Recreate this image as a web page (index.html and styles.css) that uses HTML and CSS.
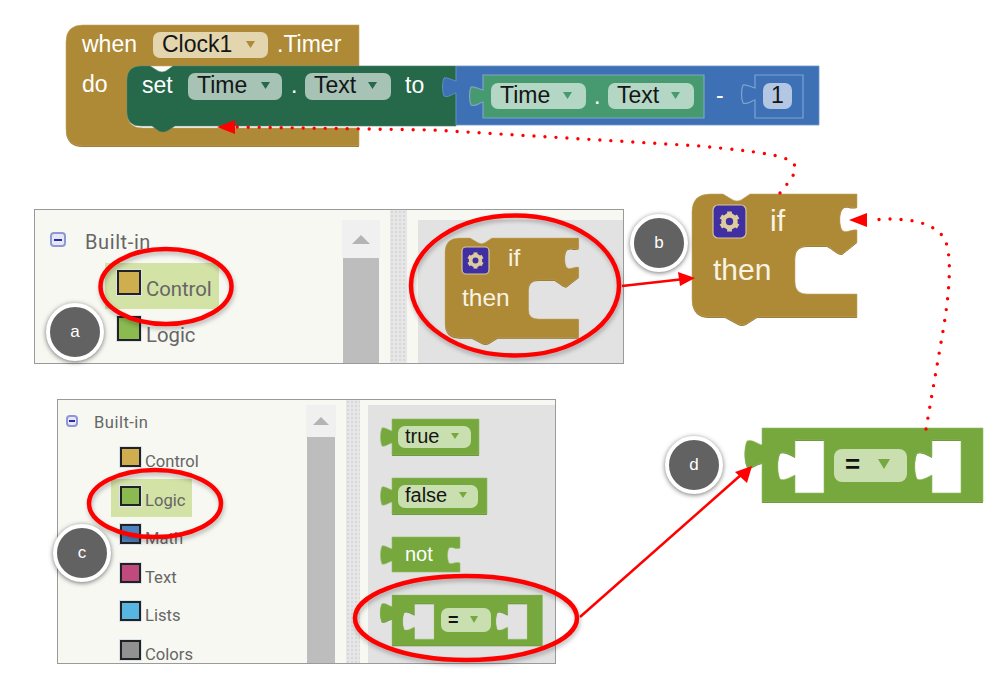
FILE: index.html
```html
<!DOCTYPE html>
<html>
  <head>
    <meta charset="utf-8">
    <title>Building the timer blocks</title>
    <link rel="stylesheet" href="styles.css">
  </head>
  <body>
    <div class="canvas">

      <!-- palette a -->
      <div class="panel panel-a">
        <div class="tree">
          <div class="tree-head">
            <span class="minus"></span>
            <span class="head-label">Built-in</span>
          </div>
          <div class="cat cat-on"><span class="swatch sw-control"></span><span class="cat-label">Control</span></div>
          <div class="cat"><span class="swatch sw-logic"></span><span class="cat-label">Logic</span></div>
        </div>
        <div class="scroll"><div class="scroll-up"><span class="up-arrow"></span></div><div class="thumb"></div></div>
        <div class="splitter"></div>
        <div class="flyout"></div>
      </div>

      <!-- palette c -->
      <div class="panel panel-c">
        <div class="tree">
          <div class="tree-head">
            <span class="minus"></span>
            <span class="head-label">Built-in</span>
          </div>
          <div class="cat"><span class="swatch sw-control"></span><span class="cat-label">Control</span></div>
          <div class="cat cat-on"><span class="swatch sw-logic"></span><span class="cat-label">Logic</span></div>
          <div class="cat"><span class="swatch sw-math"></span><span class="cat-label">Math</span></div>
          <div class="cat"><span class="swatch sw-text"></span><span class="cat-label">Text</span></div>
          <div class="cat"><span class="swatch sw-lists"></span><span class="cat-label">Lists</span></div>
          <div class="cat"><span class="swatch sw-colors"></span><span class="cat-label">Colors</span></div>
        </div>
        <div class="scroll"><div class="scroll-up"><span class="up-arrow"></span></div><div class="thumb"></div></div>
        <div class="splitter"></div>
        <div class="flyout"></div>
      </div>

      <!-- all the blocks -->
      <svg class="layer" width="1000" height="673" viewBox="0 0 1000 673">
        <defs>
          <path id="if-shape" d="M18,0 H31 L41,6 Q45,8 49,6 L58,0 H165 V13 C158,15 155,11 151,14 C147,18 147,31 150,36 C154,40 159,35 165,36 V48 L150,60 C146,61 140,54 135,52 H115 Q103,52 103,64 V88 Q103,100 115,100 H165 V123 H65 L54,130 Q50,132 46,130 L33,123 H18 Q0,123 0,105 V18 Q0,0 18,0 Z"/>
          <path id="eq-shape" fill-rule="evenodd" d="M0,0 H221 V74 H0 V35 C-6,36 -10,41 -15,39 C-18,32 -18,20 -15,13 C-10,11 -6,15 0,17 Z M33,12 H62 V65 H33 V47 C27,50 22,53 18,51 C15,44 15,32 18,25 C22,23 27,26 33,29 Z M170,12 H199 V65 H170 V47 C164,50 159,53 155,51 C152,44 152,32 155,25 C159,23 164,26 170,29 Z"/>
          <g id="gear">
            <circle r="6" class="gear-ring"/>
            <rect x="-2.4" y="-10" width="4.8" height="5" class="gear-tooth"/>
            <rect x="-2.4" y="-10" width="4.8" height="5" class="gear-tooth" transform="rotate(60)"/>
            <rect x="-2.4" y="-10" width="4.8" height="5" class="gear-tooth" transform="rotate(120)"/>
            <rect x="-2.4" y="-10" width="4.8" height="5" class="gear-tooth" transform="rotate(180)"/>
            <rect x="-2.4" y="-10" width="4.8" height="5" class="gear-tooth" transform="rotate(240)"/>
            <rect x="-2.4" y="-10" width="4.8" height="5" class="gear-tooth" transform="rotate(300)"/>
          </g>
        </defs>

        <!-- when Clock1.Timer -->
        <path class="brown-low" d="M66,130 Q66,147 83,147 H359 V140 H80 Z"/>
        <path class="brown" d="M83,25 H359 V66 H141 Q127,66 127,80 V112 Q127,128 143,128 H359 V146 H83 Q66,146 66,129 V42 Q66,25 83,25 Z"/>
        <text class="lbl" x="82" y="52">when</text>
        <rect class="pill-brown" x="153" y="32" width="115" height="26" rx="7"/>
        <text class="val" x="162" y="52">Clock1</text>
        <polygon class="tri-brown" points="246,41 255,41 250.5,48"/>
        <text class="lbl" x="277" y="52">.Timer</text>
        <text class="lbl" x="82" y="92">do</text>

        <!-- set Time.Text to -->
        <path class="dkgreen" d="M141,66 H150 L158,71 Q162,73 166,71 L173,66 H456 V126 H175 L167,131 Q163,133 159,131 L152,126 H141 Q127,126 127,112 V80 Q127,66 141,66 Z"/>
        <text class="lbl" x="142" y="93">set</text>
        <rect class="pill-dk" x="188" y="73" width="94" height="27" rx="7"/>
        <text class="val" x="197" y="93">Time</text>
        <polygon class="tri-dk" points="261,82 270,82 265.5,89"/>
        <text class="lbl" x="291" y="93">.</text>
        <rect class="pill-dk" x="305" y="73" width="86" height="27" rx="7"/>
        <text class="val" x="314" y="93">Text</text>
        <polygon class="tri-dk" points="368,82 377,82 372.5,89"/>
        <text class="lbl" x="405" y="93">to</text>

        <!-- Time.Text - 1 -->
        <path class="blue" d="M456,66 H819 V125 H456 V93 c-4,1 -8,5 -12,3 c-2,-5 -2,-13 0,-18 c3,-1 8,2 12,3 Z"/>
        <path class="socket" d="M755,75 H803 V118 H755 V100 c-4,1 -8,5 -12,3 c-2,-5 -2,-13 0,-18 c3,-1 8,2 12,3 Z"/>
        <path class="teal" d="M483,75 H704 V118 H483 V102 c-4,1 -8,5 -12,3 c-2,-5 -2,-13 0,-18 c3,-1 8,2 12,3 Z"/>
        <rect class="pill-teal" x="491" y="83" width="95" height="26" rx="7"/>
        <text class="val" x="500" y="103">Time</text>
        <polygon class="tri-teal" points="563,92 572,92 567.5,99"/>
        <text class="lbl" x="594" y="104">.</text>
        <rect class="pill-teal" x="608" y="83" width="86" height="26" rx="7"/>
        <text class="val" x="617" y="103">Text</text>
        <polygon class="tri-teal" points="671,92 680,92 675.5,99"/>
        <text class="lbl" x="716" y="103">-</text>
        <rect class="pill-blue" x="763" y="83" width="29" height="26" rx="7"/>
        <text class="val" x="771" y="103">1</text>

        <!-- big if/then -->
        <use href="#if-shape" class="brown-low" transform="translate(692,195)"/>
        <use href="#if-shape" class="brown" transform="translate(692,194)"/>
        <rect class="gear-box" x="713" y="205" width="33" height="33" rx="5"/>
        <use href="#gear" transform="translate(729.5,221.5)"/>
        <text class="lbl-if" x="770" y="231">if</text>
        <text class="lbl-if" x="713" y="280">then</text>

        <!-- flyout if/then -->
        <use href="#if-shape" class="brown-low" transform="translate(445,239) scale(.81)"/>
        <use href="#if-shape" class="brown" transform="translate(445,238) scale(.81)"/>
        <rect class="gear-box" x="462" y="247" width="27" height="27" rx="4"/>
        <use href="#gear" transform="translate(475.5,260.5) scale(.81)"/>
        <text class="lbl-if-s" x="508" y="266">if</text>
        <text class="lbl-if-s" x="462" y="306">then</text>

        <!-- big = -->
        <use href="#eq-shape" class="green-low" transform="translate(762,429)"/>
        <use href="#eq-shape" class="green" transform="translate(762,428)"/>
        <rect class="pill-green" x="834" y="449" width="73" height="33" rx="8"/>
        <text class="val-eq" x="845" y="473">=</text>
        <polygon class="tri-green" points="878,459 890,459 884,469"/>

        <!-- logic flyout -->
        <path class="green-low" d="M392,420 H479 V456 H392 Z"/>
        <path class="green" d="M392,419 H479 V455 H392 V443 c-4,1 -7,4 -10,3 c-2,-5 -2,-13 0,-18 c3,-1 6,2 10,3 Z"/>
        <rect class="pill-green" x="398" y="426" width="73" height="22" rx="7"/>
        <text class="val-s" x="405" y="443">true</text>
        <polygon class="tri-green" points="451,433 459,433 455,439"/>

        <path class="green-low" d="M392,479 H487 V515 H392 Z"/>
        <path class="green" d="M392,478 H487 V514 H392 V502 c-4,1 -7,4 -10,3 c-2,-5 -2,-13 0,-18 c3,-1 6,2 10,3 Z"/>
        <rect class="pill-green" x="398" y="485" width="80" height="23" rx="7"/>
        <text class="val-s" x="405" y="502">false</text>
        <polygon class="tri-green" points="459,492 467,492 463,498"/>

        <path class="green" d="M392,537 H460 V548 C456,550 452,546 449,548 C447,552 447,559 449,563 C452,565 456,561 460,563 V572 H392 V561 c-4,1 -7,4 -10,3 c-2,-5 -2,-13 0,-18 c3,-1 6,2 10,3 Z"/>
        <text class="lbl-s" x="405" y="561">not</text>

        <use href="#eq-shape" class="green-low" transform="translate(392,596) scale(.68)"/>
        <use href="#eq-shape" class="green" transform="translate(392,595) scale(.68)"/>
        <rect class="pill-green" x="441" y="608" width="50" height="24" rx="7"/>
        <text class="val-eq-s" x="448" y="626">=</text>
        <polygon class="tri-green" points="470,616 478,616 474,623"/>
      </svg>

      <!-- red notes on top -->
      <svg class="layer" width="1000" height="673" viewBox="0 0 1000 673">
        <path class="dots" d="M780,193 C790,180 800,170 793,163 C785,155 760,152 700,146 L433,130 L236,127"/>
        <polygon class="head" points="217,127 235,120 235,134"/>
        <path class="dots" d="M926,429 L943,331 C950,290 952,255 945,240 C938,226 918,219 889,219 L870,220"/>
        <polygon class="head" points="849,220 867,213 867,227"/>

        <path class="line" d="M622,286 L680,279.5"/>
        <polygon class="head" points="695,278 678,272 680,286"/>
        <path class="line" d="M580,617 L742,474"/>
        <polygon class="head" points="752,466 735,472 747,483"/>

        <ellipse class="ring" cx="166" cy="286.5" rx="65.5" ry="37.5"/>
        <ellipse class="ring" cx="515" cy="285.5" rx="104" ry="70"/>
        <ellipse class="ring" cx="155" cy="503.5" rx="66" ry="33.5"/>
        <ellipse class="ring" cx="466" cy="618" rx="111" ry="42"/>
      </svg>

      <div class="badge badge-a">a</div>
      <div class="badge badge-b">b</div>
      <div class="badge badge-c">c</div>
      <div class="badge badge-d">d</div>
    </div>
  </body>
</html>
```

FILE: styles.css
```css
html, body {
  margin: 0;
  background: #fff;
}

.canvas {
  position: relative;
  width: 1000px;
  height: 673px;
  overflow: hidden;
  font-family: "Liberation Sans", Arial, sans-serif;
}

.layer {
  position: absolute;
  left: 0;
  top: 0;
}

/* palettes */
.panel {
  position: absolute;
  box-sizing: border-box;
  display: flex;
  overflow: hidden;
  background: #f7f8f2;
  border: 1px solid #9a9a9a;
  font-family: Roboto, sans-serif;
  color: #666;
}

.panel-a {
  left: 34px;
  top: 209px;
  width: 590px;
  height: 155px;
}

.panel-c {
  left: 57px;
  top: 399px;
  width: 499px;
  height: 265px;
}

.tree {
  display: flex;
  flex-direction: column;
  flex: none;
}

.panel-a .tree { width: 307px; }
.panel-c .tree { width: 248px; }

.tree-head {
  display: flex;
  align-items: flex-start;
  flex: none;
  box-sizing: border-box;
}

.panel-a .tree-head { height: 53px; padding: 22px 0 0 15px; gap: 19px; }
.panel-c .tree-head { height: 40px; padding: 15px 0 0 8px; gap: 16px; }

.minus {
  position: relative;
  flex: none;
  box-sizing: border-box;
  background: #e6e8f6;
  border: 2px solid #8f97d6;
  border-radius: 4px;
}

.minus::after {
  content: "";
  position: absolute;
  left: 2px;
  right: 2px;
  top: 50%;
  height: 2px;
  margin-top: -1px;
  background: #2a2ab0;
}

.panel-a .minus { width: 16px; height: 15px; }
.panel-c .minus { width: 12px; height: 12px; }
.panel-c .minus::after { left: 1px; right: 1px; }

.head-label { line-height: 1; }
.panel-a .head-label { font-size: 20px; letter-spacing: .6px; }
.panel-c .head-label { font-size: 16.5px; letter-spacing: .5px; }

.cat {
  display: flex;
  flex: none;
  box-sizing: border-box;
  align-self: flex-start;
}

.panel-a .cat { margin-left: 70px; width: 114px; height: 46px; padding: 7px 0 0 12px; gap: 5px; }
.panel-c .cat { margin-left: 53px; width: 81px; height: 38.5px; padding: 7px 0 0 9px; gap: 4px; }

.cat-on { background: #d3e2a5; }

.swatch {
  flex: none;
  box-sizing: border-box;
  border: 2px solid #222;
  outline: 1px solid #d9e2ee;
}

.panel-a .swatch { width: 24px; height: 25px; }
.panel-c .swatch { width: 21px; height: 20px; }

.sw-control { background: #cfae50; }
.sw-logic { background: #8aba50; }
.sw-math { background: #4c82c0; }
.sw-text { background: #bf4a7c; }
.sw-lists { background: #58b4e0; }
.sw-colors { background: #919191; }

.cat-label { line-height: 1; white-space: nowrap; }
.panel-a .cat-label { font-size: 20.3px; margin-top: 9px; }
.panel-c .cat-label { font-size: 16.6px; margin-top: 7px; }

.scroll {
  display: flex;
  flex-direction: column;
  flex: none;
}

.panel-a .scroll { width: 38px; margin: 10px 10px 0 0; }
.panel-c .scroll { width: 30px; margin: 5px 10px 0 0; }

.scroll-up {
  display: flex;
  justify-content: center;
  align-items: center;
  flex: none;
  background: #f0f0f0;
}

.panel-a .scroll-up { height: 38px; }
.panel-c .scroll-up { height: 32px; }

.up-arrow {
  width: 0;
  height: 0;
  border-left: 9px solid transparent;
  border-right: 9px solid transparent;
  border-bottom: 9px solid #b4b4b4;
}

.panel-c .up-arrow {
  border-left-width: 8px;
  border-right-width: 8px;
  border-bottom-width: 8px;
}

.thumb {
  flex: 1;
  margin: 0 1px;
  background: #bdbdbd;
}

.splitter {
  flex: none;
  background-color: #e6e6e6;
  background-image: radial-gradient(#d8d8d8 1px, transparent 1px);
  background-size: 4px 4px;
}

.panel-a .splitter { width: 17px; margin-right: 11px; }
.panel-c .splitter { width: 14px; margin-right: 8px; }

.flyout {
  flex: 1;
  background: #e2e2e2;
}

.panel-a .flyout { margin-top: 10px; }
.panel-c .flyout { margin-top: 5px; }

/* block colours */
.brown { fill: #ae8a36; stroke: #c4a664; stroke-width: .6; }
.brown-low { fill: #8d6f2a; }
.dkgreen { fill: #26684a; stroke: #4a8268; stroke-width: .6; }
.blue { fill: #3e70b5; stroke: #6f94c8; stroke-width: .8; }
.socket { fill: #3e70b5; stroke: #7fa3d2; stroke-width: 1.2; }
.teal { fill: #479a6f; stroke: #7fa3c4; stroke-width: 1.2; }
.green { fill: #76a83e; stroke: #93bd66; stroke-width: .6; }
.green-low { fill: #5f8a2f; }

.pill-brown { fill: #e3d5ae; }
.pill-dk { fill: #a6c3b5; }
.pill-teal { fill: #b3d7c4; }
.pill-blue { fill: #b3c6e2; }
.pill-green { fill: #c9dfb0; }

.tri-brown { fill: #ae8a36; }
.tri-dk { fill: #26684a; }
.tri-teal { fill: #479a6f; }
.tri-green { fill: #76a83e; }

.gear-box { fill: #3f2fa3; stroke: #d6c79a; stroke-width: 1.2; }
.gear-ring { fill: none; stroke: #dccc9e; stroke-width: 4.6; }
.gear-tooth { fill: #dccc9e; }

.lbl, .val, .lbl-if, .lbl-if-s, .lbl-s, .val-s, .val-eq, .val-eq-s {
  font-family: "Liberation Sans", Arial, sans-serif;
}

.lbl { font-size: 23px; fill: #fff; }
.val { font-size: 23px; fill: #151515; }
.lbl-if { font-size: 30px; fill: #f8f3e3; }
.lbl-if-s { font-size: 24.5px; fill: #f8f3e3; }
.lbl-s { font-size: 20px; fill: #fff; }
.val-s { font-size: 20px; fill: #151515; }
.val-eq { font-size: 26px; font-weight: bold; fill: #111; }
.val-eq-s { font-size: 18px; font-weight: bold; fill: #111; }

/* notes */
.dots {
  fill: none;
  stroke: #f00;
  stroke-width: 3.4;
  stroke-linecap: round;
  stroke-dasharray: 0 11;
}

.line {
  fill: none;
  stroke: #f00;
  stroke-width: 2.5;
}

.head { fill: #f00; }

.ring {
  fill: none;
  stroke: #f00;
  stroke-width: 4.5;
  filter: drop-shadow(1px 3px 2px rgba(0, 0, 0, .25));
}

.badge {
  position: absolute;
  box-sizing: border-box;
  display: flex;
  align-items: center;
  justify-content: center;
  width: 58px;
  height: 58px;
  background: #626262;
  border: 4px solid #fff;
  border-radius: 50%;
  box-shadow: 0 1px 5px rgba(0, 0, 0, .55);
  color: #fff;
  font-size: 17px;
}

.badge-a { left: 46px; top: 303px; }
.badge-b { left: 630px; top: 214px; }
.badge-c { left: 53px; top: 524px; }
.badge-d { left: 665px; top: 436px; }
```
